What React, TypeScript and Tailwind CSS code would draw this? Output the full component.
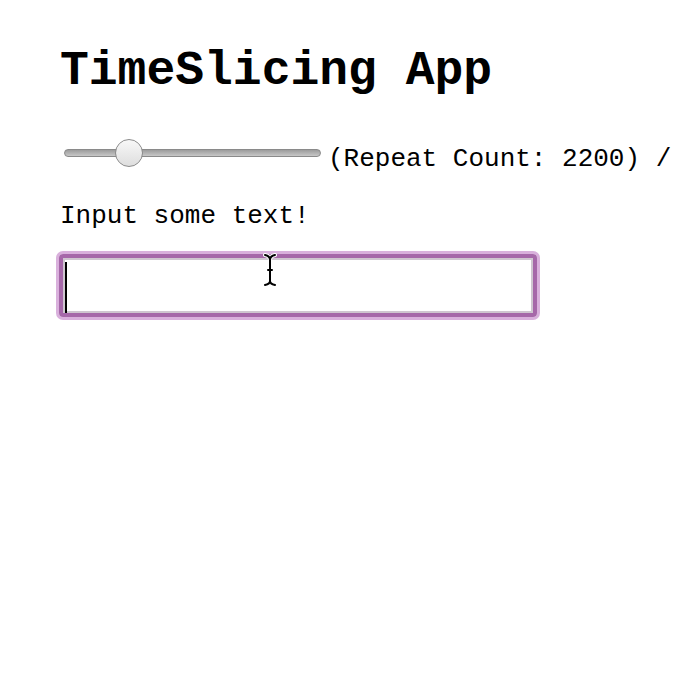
import { useState } from "react";

export default function App() {
  const [count, setCount] = useState(2200);

  return (
    <div className="min-h-[674px] w-[674px] overflow-hidden bg-white pl-[60px] pt-[44px] font-['Liberation_Mono',monospace] text-black">
      <h1 className="text-[48px] font-bold leading-[54px]">TimeSlicing App</h1>

      <div className="mt-[40px] flex items-end whitespace-nowrap">
        <input
          type="range"
          min={0}
          max={10000}
          value={count}
          onChange={(e) => setCount(Number(e.target.value))}
          className="mb-[6px] ml-[4px] h-[30px] w-[257px] cursor-pointer appearance-none bg-transparent [&::-webkit-slider-runnable-track]:h-[8px] [&::-webkit-slider-runnable-track]:rounded-full [&::-webkit-slider-runnable-track]:border [&::-webkit-slider-runnable-track]:border-[#8a8a8a] [&::-webkit-slider-runnable-track]:bg-gradient-to-b [&::-webkit-slider-runnable-track]:from-[#9c9c9c] [&::-webkit-slider-runnable-track]:to-[#c8c8c8] [&::-webkit-slider-thumb]:mt-[-11px] [&::-webkit-slider-thumb]:h-[28px] [&::-webkit-slider-thumb]:w-[28px] [&::-webkit-slider-thumb]:appearance-none [&::-webkit-slider-thumb]:rounded-full [&::-webkit-slider-thumb]:border [&::-webkit-slider-thumb]:border-[#8c8c8c] [&::-webkit-slider-thumb]:bg-gradient-to-b [&::-webkit-slider-thumb]:from-[#f8f8f8] [&::-webkit-slider-thumb]:to-[#dedede]"
        />
        <span className="ml-[7px] text-[26px] leading-[30px]">(Repeat Count: {count}) /</span>
      </div>

      <div className="mt-[27px] text-[26px] leading-[30px]">Input some text!</div>

      <div className="relative ml-[-4px] mt-[20px] w-[484px] rounded-[7px] border-[3px] border-[#d9b0dc]">
        <input
          type="text"
          className="block h-[63px] w-full rounded-[4px] border-[4px] border-[#a668a9] bg-white shadow-[inset_0_0_0_2px_#cfc6d0] outline-none"
        />
        <div className="pointer-events-none absolute left-[6px] top-[8px] h-[51px] w-[2px] bg-black" />
        <svg
          className="pointer-events-none absolute left-[204px] top-[-1px]"
          width="14"
          height="34"
          viewBox="0 0 14 34"
          fill="none"
        >
          <path
            d="M2 2 Q7 3 7 7 Q7 3 12 2 M7 7 V28 M4 17 H10 M2 32 Q7 31 7 28 Q7 31 12 32"
            stroke="white"
            strokeWidth="4"
            strokeLinecap="round"
          />
          <path
            d="M2 2 Q7 3 7 7 Q7 3 12 2 M7 7 V28 M5 17 H9 M2 32 Q7 31 7 28 Q7 31 12 32"
            stroke="black"
            strokeWidth="2"
            strokeLinecap="round"
          />
        </svg>
      </div>
    </div>
  );
}
